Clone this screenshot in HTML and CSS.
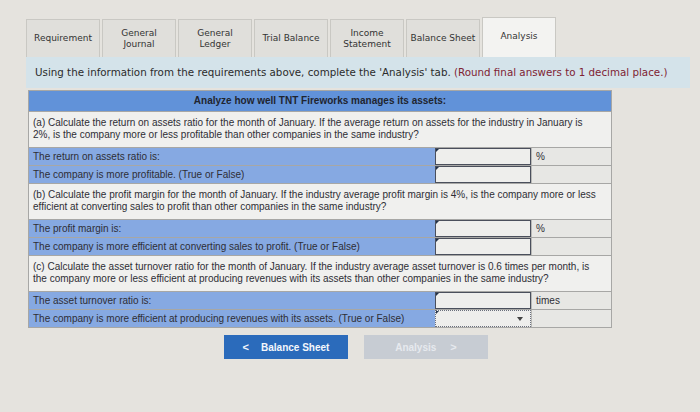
FILE: index.html
```html
<!DOCTYPE html>
<html>
<head>
<meta charset="utf-8">
<link rel="stylesheet" href="styles.css">
</head>
<body>
<div class="page">
  <div class="tabs">
    <div class="tab">Requirement</div>
    <div class="tab">General<br>Journal</div>
    <div class="tab">General<br>Ledger</div>
    <div class="tab">Trial Balance</div>
    <div class="tab">Income<br>Statement</div>
    <div class="tab">Balance Sheet</div>
    <div class="tab active">Analysis</div>
  </div>
  <div class="instr">Using the information from the requirements above, complete the 'Analysis' tab. <span class="red">(Round final answers to 1 decimal place.)</span></div>

  <div class="table">
    <div class="head">Analyze how well TNT Fireworks manages its assets:</div>

    <div class="q">(a) Calculate the return on assets ratio for the month of January. If the average return on assets for the industry in January is 2%, is the company more or less profitable than other companies in the same industry?</div>
    <div class="row">
      <div class="label">The return on assets ratio is:</div>
      <div class="inp"></div>
      <div class="unit">%</div>
    </div>
    <div class="row">
      <div class="label">The company is more profitable. (True or False)</div>
      <div class="inp"></div>
      <div class="unit"></div>
    </div>

    <div class="q">(b) Calculate the profit margin for the month of January. If the industry average profit margin is 4%, is the company more or less efficient at converting sales to profit than other companies in the same industry?</div>
    <div class="row">
      <div class="label">The profit margin is:</div>
      <div class="inp"></div>
      <div class="unit">%</div>
    </div>
    <div class="row">
      <div class="label">The company is more efficient at converting sales to profit. (True or False)</div>
      <div class="inp"></div>
      <div class="unit"></div>
    </div>

    <div class="q">(c) Calculate the asset turnover ratio for the month of January. If the industry average asset turnover is 0.6 times per month, is the company more or less efficient at producing revenues with its assets than other companies in the same industry?</div>
    <div class="row">
      <div class="label">The asset turnover ratio is:</div>
      <div class="inp"></div>
      <div class="unit">times</div>
    </div>
    <div class="row">
      <div class="label">The company is more efficient at producing revenues with its assets. (True or False)</div>
      <div class="inp select"><span class="caret"></span></div>
      <div class="unit"></div>
    </div>
  </div>

  <div class="nav">
    <div class="btn prev"><span class="chev">&lt;</span>Balance Sheet</div>
    <div class="btn next">Analysis<span class="chev">&gt;</span></div>
  </div>
</div>
</body>
</html>
```
FILE: styles.css
```css
html, body {
  margin: 0;
  padding: 0;
  background: #e5e3de;
}
.page {
  width: 700px;
  height: 412px;
  padding: 17px 0 0 26px;
  box-sizing: border-box;
  font-family: "DejaVu Sans", Verdana, sans-serif;
}
.tabs {
  display: flex;
  align-items: flex-end;
  gap: 2px;
  height: 40px;
}
.tab {
  width: 74px;
  height: 38px;
  box-sizing: border-box;
  background: #e0dfdb;
  border: 1px solid #c9c8c3;
  border-bottom: none;
  display: flex;
  align-items: center;
  justify-content: center;
  text-align: center;
  font-size: 9px;
  line-height: 11px;
  color: #333;
}
.tab.active {
  height: 40px;
  background: #f3f3f1;
  align-items: flex-start;
  padding-top: 13px;
}
.instr {
  width: 664px;
  height: 31px;
  box-sizing: border-box;
  background: #d4e3ea;
  font-size: 10.3px;
  color: #2b2b2b;
  padding: 9px 0 0 9px;
  white-space: nowrap;
}
.red { color: #7e2232; }
.table {
  width: 582px;
  margin: 2px 0 0 2px;
  border: 1px solid #a7a7a5;
  font-family: "Liberation Sans", Arial, sans-serif;
  font-size: 10px;
  color: #2e2e35;
  background: #f0f0ee;
}
.head {
  height: 20px;
  background: #6192d9;
  font-weight: bold;
  font-size: 10px;
  text-align: center;
  line-height: 20px;
  color: #1f2530;
  border-bottom: 1px solid #a7a7a5;
}
.q {
  padding: 5px 12px 6px 4px;
  line-height: 12px;
  min-height: 24px;
  border-bottom: 1px solid #a7a7a5;
}
.row {
  display: flex;
  height: 17px;
  border-bottom: 1px solid #a7a7a5;
}
.row:last-child { border-bottom: none; }
.label {
  width: 406px;
  background: #86a9e2;
  padding-left: 4px;
  line-height: 17px;
  box-sizing: border-box;
}
.inp {
  width: 96px;
  background: #eeeeec;
  border: 1px solid #4a4f5c;
  box-sizing: border-box;
  position: relative;
}
.inp::before {
  content: "";
  position: absolute;
  left: 0;
  top: 0;
  border-left: 3px solid #22324a;
  border-bottom: 3px solid transparent;
}
.inp.select {
  border: 1px dotted #6a6f7c;
}
.caret {
  position: absolute;
  right: 7px;
  top: 6px;
  border-left: 3px solid transparent;
  border-right: 3px solid transparent;
  border-top: 4px solid #444;
}
.unit {
  flex: 1;
  background: #e7e7e4;
  border-left: 1px solid #b9b9b6;
  line-height: 17px;
  padding-left: 4px;
}
.nav {
  display: flex;
  gap: 16px;
  margin: 7px 0 0 198px;
}
.btn {
  width: 124px;
  height: 24px;
  box-sizing: border-box;
  display: flex;
  align-items: center;
  justify-content: center;
  font-family: "Liberation Sans", Arial, sans-serif;
  font-weight: bold;
  font-size: 10px;
}
.btn.prev {
  background: #2b6bbb;
  color: #f4f7fb;
}
.btn.next {
  background: #c7ccd3;
  color: #e6e9ee;
}
.prev .chev { margin-right: 12px; font-size: 11px; }
.next .chev { margin-left: 14px; font-size: 11px; }
```
